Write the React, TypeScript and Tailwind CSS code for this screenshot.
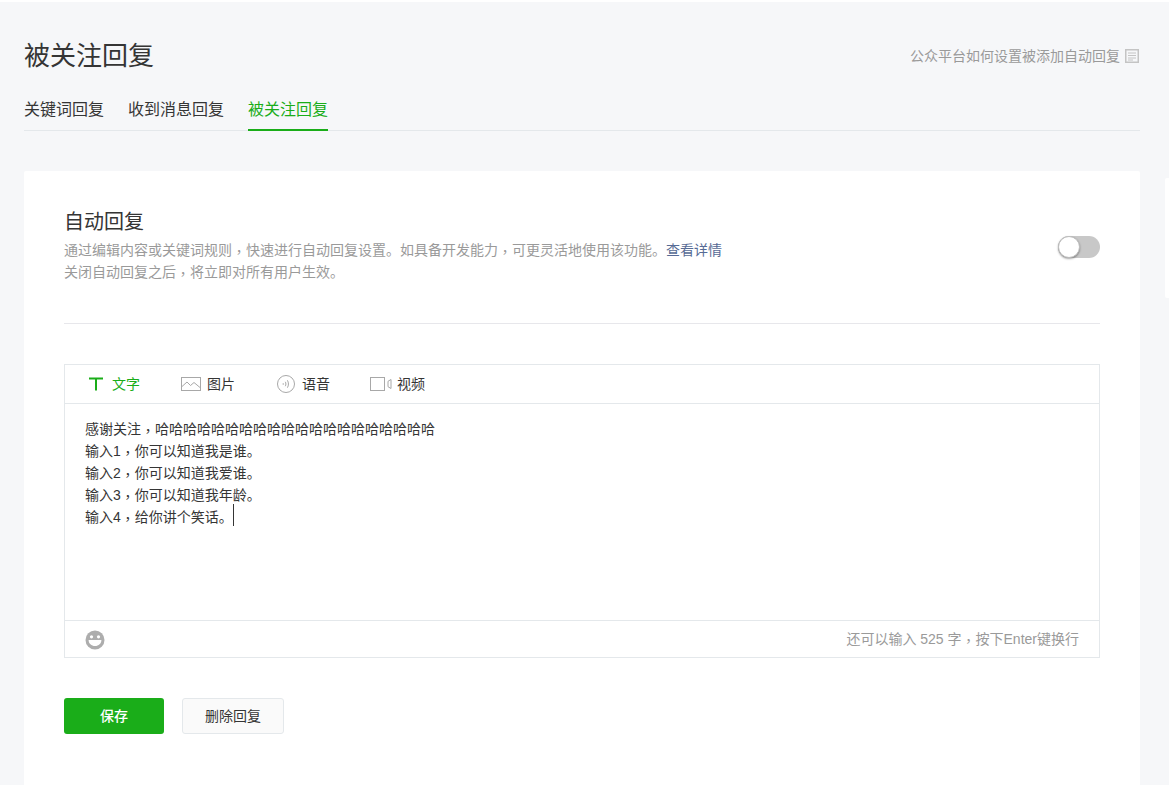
const font = '[font-family:"Liberation_Sans","Noto_Sans_CJK_SC",sans-serif]';

function Comma() {
  return <span className='inline-block h-[14px] w-[14px] translate-y-[2px] leading-[14px] [font-family:"Noto_Sans_CJK_TC",sans-serif]'>，</span>;
}

function TabIcon({ kind }: { kind: string }) {
  if (kind === "text")
    return (
      <svg width="16" height="14" viewBox="0 0 16 14" className="block">
        <path d="M1 1.5h14M8 1.5V13.5" stroke="#1aad19" strokeWidth="2" fill="none" />
      </svg>
    );
  if (kind === "image")
    return (
      <svg width="20" height="14" viewBox="0 0 20 14" className="block">
        <rect x="0.5" y="0.5" width="19" height="13" fill="none" stroke="#a8a8a8" />
        <path d="M1 9.5 6 5l3.5 3.5L13 5.5 19 10.5" fill="none" stroke="#a8a8a8" />
      </svg>
    );
  if (kind === "voice")
    return (
      <svg width="18" height="18" viewBox="0 0 18 18" className="block">
        <circle cx="9" cy="9" r="8.5" fill="none" stroke="#a8a8a8" />
        <path d="M6.2 8.2v1.6M8.3 6.8c.8 1.4.8 3 0 4.4M10.4 5.3c1.4 2.3 1.4 5.1 0 7.4" fill="none" stroke="#a8a8a8" />
      </svg>
    );
  return (
    <svg width="22" height="14" viewBox="0 0 22 14" className="block">
      <rect x="0.5" y="0.5" width="14" height="13" fill="none" stroke="#a8a8a8" />
      <path d="M21 2.5v9l-3-1.8V4.3z" fill="none" stroke="#a8a8a8" />
    </svg>
  );
}

function Smile() {
  return (
    <svg width="20" height="20" viewBox="0 0 20 20" className="block translate-y-[1px]">
      <circle cx="10" cy="10" r="9.5" fill="#adadad" />
      <circle cx="6.5" cy="6.8" r="1.6" fill="#fff" />
      <circle cx="13.5" cy="6.8" r="1.6" fill="#fff" />
      <path d="M3.6 10h12.8c0 3.6-2.8 6-6.4 6s-6.4-2.4-6.4-6z" fill="#fff" />
    </svg>
  );
}

function DocIcon() {
  return (
    <svg width="14" height="14" viewBox="0 0 14 14" className="block">
      <rect x="0.75" y="0.75" width="12.5" height="12.5" fill="#f6f7f9" stroke="#c4c4c4" strokeWidth="1.5" />
      <path d="M3 4h8M3 6.5h8M3 9h8M3 11h5" stroke="#c4c4c4" strokeWidth="1" />
    </svg>
  );
}

export default function App() {
  const tabs = [
    { k: "text", label: "文字", cls: "w-[92px] pl-[23px] gap-[8px] text-[#1aad19]" },
    { k: "image", label: "图片", cls: "w-[96px] pl-[24px] gap-[6px]" },
    { k: "voice", label: "语音", cls: "w-[93px] pl-[24px] gap-[7px]" },
    { k: "video", label: "视频", cls: "pl-[24px] gap-[5px]" },
  ];
  return (
    <div className={`relative h-[785px] w-full overflow-hidden bg-[#f6f7f9] border-t-2 border-white text-[#353535] ${font}`}>
      <div className="absolute right-0 top-[176px] h-[120px] w-[4px] rounded-l-[2px] bg-white" />
      <div className="px-[24px] pr-[29px] pt-[34px]">
        <div className="flex items-center justify-between h-[40px]">
          <h1 className="text-[26px] leading-[40px] font-normal text-[#353535]">被关注回复</h1>
          <div className="flex items-center gap-[5px] text-[14px] text-[#9a9a9a] pr-[1px]">
            <span>公众平台如何设置被添加自动回复</span>
            <DocIcon />
          </div>
        </div>
        <div className="mt-[13px] flex gap-[24px] border-b border-[#e4e8eb] h-[42px] text-[16px] leading-[42px]">
          <span>关键词回复</span>
          <span>收到消息回复</span>
          <span className="h-[42px] border-b-2 border-[#1aad19] text-[#1aad19]">被关注回复</span>
        </div>
        <div className="mt-[40px] h-[640px] rounded-t-[2px] bg-white px-[40px] pt-[36px]">
          <div className="flex items-start justify-between h-[117px] border-b border-[#e7e7eb]">
            <div>
              <h2 className="mt-[1px] text-[20px] leading-[28px] font-normal text-[#353535]">自动回复</h2>
              <div className="mt-[3px] text-[14px] leading-[22px] text-[#9a9a9a]">
                <div>
                  通过编辑内容或关键词规则<Comma />快速进行自动回复设置。如具备开发能力<Comma />可更灵活地使用该功能。
                  <span className="text-[#576b95]">查看详情</span>
                </div>
                <div>关闭自动回复之后<Comma />将立即对所有用户生效。</div>
              </div>
            </div>
            <div className="relative mt-[29px] h-[22px] w-[42px] rounded-full bg-[#c8c8c8]">
              <div className="absolute left-0 top-0 h-[22px] w-[22px] rounded-full border border-[#bdbdbd] bg-white shadow-[0_1px_2px_rgba(0,0,0,0.35)]" />
            </div>
          </div>
          <div className="mt-[40px] border border-[#e4e8eb]">
            <div className="flex h-[39px] items-center border-b border-[#e4e8eb] text-[14px]">
              {tabs.map((t) => (
                <div key={t.k} className={`flex items-center ${t.cls}`}>
                  <TabIcon kind={t.k} />
                  <span>{t.label}</span>
                </div>
              ))}
            </div>
            <div className="h-[217px] px-[20px] pt-[14px] text-[14px] leading-[22px] border-b border-[#e4e8eb]">
              <div>感谢关注<Comma />哈哈哈哈哈哈哈哈哈哈哈哈哈哈哈哈哈哈哈哈</div>
              <div>输入1<Comma />你可以知道我是谁。</div>
              <div>输入2<Comma />你可以知道我爱谁。</div>
              <div>输入3<Comma />你可以知道我年龄。</div>
              <div className="flex items-center">
                <span>输入4<Comma />给你讲个笑话。</span>
                <span className="h-[22px] w-px bg-[#353535] -translate-y-[2px]" />
              </div>
            </div>
            <div className="flex h-[36px] items-center justify-between pl-[20px] pr-[20px] text-[14px] text-[#9a9a9a]">
              <Smile />
              <span>还可以输入 525 字<Comma />按下Enter键换行</span>
            </div>
          </div>
          <div className="mt-[40px] flex gap-[18px] text-[14px]">
            <button className="h-[36px] w-[100px] rounded-[3px] bg-[#1aad19] text-white font-medium">保存</button>
            <button className="h-[36px] w-[102px] rounded-[3px] border border-[#e4e8eb] bg-[#fafafa] text-[#353535]">删除回复</button>
          </div>
        </div>
      </div>
    </div>
  );
}
